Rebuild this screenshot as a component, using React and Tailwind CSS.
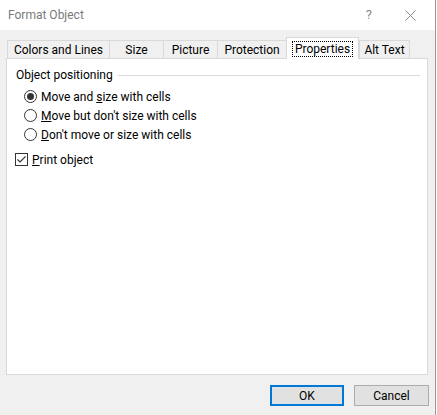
import React from "react";

const font = { fontFamily: '"Segoe UI", Roboto, "Noto Sans", sans-serif' };

function Radio({ checked, children }) {
  return (
    <div className="flex items-center h-[19px]">
      <span className="w-[13px] h-[13px] rounded-full border border-[#333333] bg-white flex items-center justify-center">
        {checked && <span className="w-[7px] h-[7px] rounded-full bg-[#333333]" />}
      </span>
      <span className="ml-[4px] text-[12px] text-black leading-none">{children}</span>
    </div>
  );
}

function Tab({ label, w, selected, last }) {
  if (selected) {
    return (
      <div
        className={`relative z-10 h-[22px] -mb-px bg-white border border-b-0 border-[#d9d9d9] flex items-center justify-center text-[12px] text-black`}
        style={{ width: w }}
      >
        <span className="border border-dotted border-black px-[2px] leading-[14px]">{label}</span>
      </div>
    );
  }
  return (
    <div
      className={`h-[18px] border-t border-l ${last ? "border-r" : ""} border-[#d9d9d9] bg-[#f0f0f0] flex items-center justify-center text-[12px] text-black leading-none`}
      style={{ width: w }}
    >
      {label}
    </div>
  );
}

export default function App() {
  return (
    <div className="h-[415px] bg-[#f0f0f0] flex flex-col overflow-hidden border-r border-[#9a9a9a] w-[436px]" style={font}>
      <div className="h-[30px] bg-white flex items-center shrink-0">
        <span className="ml-[8px] text-[12px] text-[#7a7a7a] flex-1">Format Object</span>
        <span className="text-[13px] text-[#8a8a8a] mr-[33px]">?</span>
        <svg width="11" height="11" viewBox="0 0 11 11" className="mr-[19px]">
          <path d="M0.5 0.5 L10.5 10.5 M10.5 0.5 L0.5 10.5" stroke="#8a8a8a" strokeWidth="1" fill="none" />
        </svg>
      </div>
      <div className="flex items-end ml-[7px] h-[28px] shrink-0">
        <Tab label="Colors and Lines" w={102} />
        <Tab label="Size" w={54} />
        <Tab label="Picture" w={54} />
        <Tab label="Protection" w={69} />
        <Tab label="Properties" w={73} selected />
        <Tab label="Alt Text" w={51} last />
      </div>
      <div className="ml-[6px] w-[422px] h-[317px] bg-white border border-[#d9d9d9] shrink-0">
        <div className="flex items-center mt-[10px] ml-[9px] mr-[7px]">
          <span className="text-[12px] text-black leading-none">Object positioning</span>
          <div className="flex-1 h-px bg-[#dcdcdc] ml-[5px]" />
        </div>
        <div className="ml-[17px] mt-[6px] flex flex-col">
          <Radio checked>Move and <span className="underline">s</span>ize with cells</Radio>
          <Radio><span className="underline">M</span>ove but don't size with cells</Radio>
          <Radio><span className="underline">D</span>on't move or size with cells</Radio>
        </div>
        <div className="flex items-center ml-[8px] mt-[9px]">
          <span className="w-[13px] h-[13px] border border-[#333333] bg-white flex items-center justify-center">
            <svg width="11" height="11" viewBox="0 0 11 11">
              <path d="M1.5 5.5 L4 8 L9.5 2.5" stroke="#333333" strokeWidth="1.1" fill="none" />
            </svg>
          </span>
          <span className="ml-[4px] text-[12px] text-black leading-none"><span className="underline">P</span>rint object</span>
        </div>
      </div>
      <div className="flex justify-end mt-[10px] mr-[6px] gap-[10px]">
        <button className="w-[74px] h-[21px] bg-[#e1e1e1] border-2 border-[#0078d7] text-[12px] text-black leading-none">OK</button>
        <button className="w-[75px] h-[21px] bg-[#e1e1e1] border border-[#adadad] text-[12px] text-black leading-none">Cancel</button>
      </div>
    </div>
  );
}
